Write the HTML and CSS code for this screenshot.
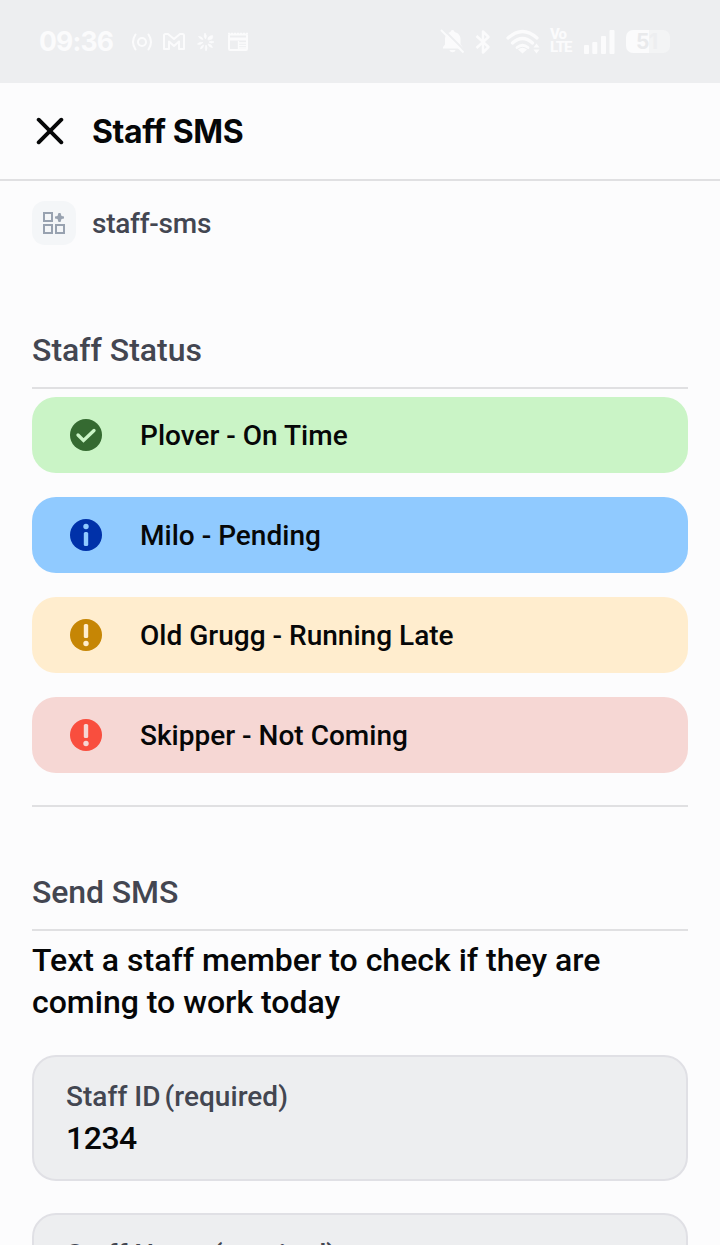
FILE: index.html
```html
<!DOCTYPE html>
<html lang="en">
<head>
<meta charset="utf-8">
<title>Staff SMS</title>
<link rel="stylesheet" href="styles.css">
</head>
<body>
<div class="screen">
  <div class="status-bar">
    <span class="clock">09:36</span>
    <div class="notifications">
      <svg width="22" height="20" viewBox="0 0 22 20" fill="none" stroke="currentColor" stroke-width="2" stroke-linecap="round"><circle cx="11" cy="10" r="4"/><path d="M4.500 2.500Q-.5 10 4.500 17.500M17.500 2.500Q22.500 10 17.500 17.500"/></svg>
      <svg width="22" height="20" viewBox="0 0 22 20" fill="none" stroke="currentColor" stroke-width="2" stroke-linejoin="round"><path d="M1 17V3.500Q1 2 2.500 2H5L11 7L17 2H19.500Q21 2 21 3.500V17H16V9.500L11 14L6 9.500V17Z"/></svg>
      <svg width="22" height="20" viewBox="0 0 22 20" fill="currentColor" stroke="currentColor" stroke-width="0.700"><path d="M10 1Q12.500 4 10.500 7Q8 4 10 1ZM3.500 4.500Q7 4 8 7.500Q5 7.500 3.500 4.500ZM2.500 12Q4.500 9.500 8 10.500Q5 13.500 2.500 12ZM5.500 17Q5.500 14 8.500 13Q8.500 16.500 5.500 17ZM11 19Q9.500 16 11 13Q13 16 11 19ZM13 12Q16.500 12 17.500 15.500Q14 15.500 13 12ZM14 10Q16 8.500 19 10Q16.500 12 14 10ZM13 8Q12.500 4 17.500 3.500Q19 7.500 13 8Z"/></svg>
      <svg width="20" height="20" viewBox="0 0 20 20" fill="none" stroke="currentColor"><rect x="1" y="2.500" width="18" height="15.500" rx="1" stroke-width="2"/><path d="M0 1.500H20" stroke-width="1.500" stroke-dasharray="2 1"/><path d="M2 7H18" stroke-width="3"/><path d="M10.500 9V18M11 11H18M11 13.500H18M11 16H18" stroke-width="1.300"/></svg>
    </div>
    <div class="system">
      <svg width="26" height="26" viewBox="0 0 26 26"><path fill="currentColor" d="M12.500 1a2 2 0 0 1 2 2c4 1 6 4 6 7v5l2 3v1.500H3V18l2-2.500V10c0-3 2-6 5.500-7a2 2 0 0 1 2-2zM9.500 21h6c-.5 3-5.500 3-6 0z"/><path d="M2.500-.5L25.500 22.500" stroke="#edeef0" stroke-width="2"/><path d="M1 1L23.500 23.500" stroke="currentColor" stroke-width="2"/></svg>
      <svg class="bluetooth" width="16" height="26" viewBox="0 0 16 26" fill="none" stroke="currentColor" stroke-width="2.500" stroke-linejoin="round"><path d="M1.500 7L13.500 18L8 23.500V2.500L13.500 8L1.500 19"/></svg>
      <svg class="wifi" width="34" height="26" viewBox="0 0 34 26" fill="none" stroke="currentColor" stroke-width="3.200" stroke-linecap="round"><path d="M2 9Q16.500-4 31 9M6.500 14Q16.500 5 26.500 14"/><path d="M11 18.500Q16.500 14 22 18.500" stroke-width="2.800"/><path d="M12 20.500Q16.500 17 21 20.500L16.500 24.500Z" fill="currentColor" stroke="none"/><path d="M27.500 18.500L30.500 14.500L33.500 18.500ZM27.500 20.500L30.500 24.500L33.500 20.500Z" fill="currentColor" stroke="none"/></svg>
      <span class="volte"><span>Vo</span><span>LTE</span></span>
      <svg class="signal" width="31" height="26" viewBox="0 0 31 26" fill="currentColor"><rect y="16" width="5" height="9" rx="1"/><rect x="8.300" y="13" width="5" height="12" rx="1"/><rect x="17" y="7" width="5" height="18" rx="1"/><rect x="25.500" y="1" width="5" height="24" rx="1"/></svg>
      <span class="battery"><span class="level-a">5</span><span class="level-b">1</span></span>
    </div>
  </div>

  <header class="app-header">
    <svg width="28" height="28" viewBox="0 0 28 28" fill="none" stroke="#060708" stroke-width="3.900" stroke-linecap="round"><path d="M2.700 2.700L25.300 25.300M25.300 2.700L2.700 25.300"/></svg>
    <h1 class="title">Staff SMS</h1>
  </header>

  <main class="content">
    <div class="app-row">
      <span class="app-icon"><svg width="24" height="24" viewBox="0 0 24 24" fill="none" stroke="#98a2b0" stroke-width="2"><path d="M2 2H10V10H2ZM2 14H10V22H2ZM14 14H22V22H14Z"/><path fill="#98a2b0" stroke="none" d="M16.500 2H18.500L19.500 5L22 5.500V7.500L19.500 8L18.500 11H16.500L15.500 8L13 7.500V5.500L15.500 5Z"/></svg></span>
      <span class="app-name">staff-sms</span>
    </div>

    <section class="status-section">
      <h2 class="section-title">Staff Status</h2>
      <div class="cards">
        <div class="card on-time"><svg class="card-icon" viewBox="0 0 32 32"><circle cx="16" cy="16" r="16" fill="#356a31"/><path d="M8 16L13.500 21.500L24 11.500" fill="none" stroke="#caf4c6" stroke-width="3.300" stroke-linecap="round"/></svg><span>Plover - On Time</span></div>
        <div class="card pending"><svg class="card-icon" viewBox="0 0 32 32"><circle cx="16" cy="16" r="16" fill="#0031a9"/><circle cx="16" cy="7.500" r="2.700" fill="#90caff"/><rect x="13.800" y="13" width="4.400" height="14" rx="1.500" fill="#90caff"/></svg><span>Milo - Pending</span></div>
        <div class="card late"><svg class="card-icon" viewBox="0 0 32 32"><circle cx="16" cy="16" r="16" fill="#c68605"/><rect x="13.800" y="5" width="4.400" height="14" rx="1.500" fill="#ffedce"/><circle cx="16" cy="24.500" r="2.700" fill="#ffedce"/></svg><span>Old Grugg - Running Late</span></div>
        <div class="card absent"><svg class="card-icon" viewBox="0 0 32 32"><circle cx="16" cy="16" r="16" fill="#f94e3e"/><rect x="13.800" y="5" width="4.400" height="14" rx="1.500" fill="#f6d7d4"/><circle cx="16" cy="24.500" r="2.700" fill="#f6d7d4"/></svg><span>Skipper - Not Coming</span></div>
      </div>
    </section>

    <section class="send-section">
      <h2 class="section-title send-title">Send SMS</h2>
      <p class="description">Text a staff member to check if they are coming to work today</p>
      <div class="field"><span class="label"><span>Staff ID</span><span>(required)</span></span><span class="value">1234</span></div>
      <div class="field"><span class="label"><span>Staff Name</span><span>(required)</span></span></div>
    </section>
  </main>
</div>
</body>
</html>
```
FILE: styles.css
```css
* { box-sizing: border-box; }
body { margin: 0; background: #fcfcfd; color: #060708; font-family: Roboto, sans-serif; font-weight: 500; }
svg { display: block; flex: none; }
h1, h2, p { margin: 0; }
.screen { width: 720px; height: 1245px; overflow: hidden; }

.status-bar { height: 83px; background: #edeef0; color: #fbfbfc; display: flex; align-items: center; padding: 0 50px 0 39px; }
.clock { width: 92px; padding-bottom: 2px; font: 700 26.500px/32px Inter, sans-serif; letter-spacing: -0.8px; }
.notifications { display: flex; align-items: center; gap: 10px; }
.notifications svg:last-child { margin-left: 1px; }
.system { display: flex; align-items: center; margin-left: auto; }
.bluetooth { margin-left: 9px; }
.wifi { margin-left: 15px; }
.volte { display: flex; flex-direction: column; width: 22px; margin-left: 10px; padding-bottom: 1px; font: 800 15px/13px Roboto, sans-serif; letter-spacing: -0.9px; }
.signal { margin-left: 12px; }
.battery { display: flex; width: 44px; height: 23px; margin-left: 11px; border-radius: 7px; background: linear-gradient(90deg, #fbfbfc 0 52%, #f3f4f5 52%); font: 700 21px/24px Inter, sans-serif; }
.level-a { width: 23px; padding-left: 10px; color: #e9eaec; }
.level-b { color: #edeef0; }

.app-header { height: 98px; border-bottom: 2px solid #e0e0e2; display: flex; align-items: center; gap: 28px; padding-left: 36px; }
.title { padding-top: 2px; font: 700 32px/40px Inter, sans-serif; letter-spacing: -0.4px; }

.content { padding: 20px 32px 0; }
.app-row { display: flex; align-items: center; gap: 16px; height: 44px; }
.app-icon { display: grid; place-items: center; width: 44px; height: 44px; border-radius: 13px; background: #f4f6f8; }
.app-name { padding-top: 2px; font-size: 28px; line-height: 36px; letter-spacing: -0.25px; color: #434651; }

.status-section { margin-top: 85px; padding-bottom: 32px; border-bottom: 2px solid #e0e0e2; }
.section-title { height: 59px; border-bottom: 2px solid #e0e0e2; font-size: 32px; line-height: 40px; font-weight: 500; color: #434651; }
.send-title { letter-spacing: -0.1px; }
.cards { display: flex; flex-direction: column; gap: 24px; margin-top: 8px; }
.card { display: flex; align-items: center; gap: 38px; height: 76px; padding-left: 38px; border-radius: 24px; font-size: 28px; letter-spacing: 0.01px; }
.card-icon { width: 32px; height: 32px; }
.on-time { background: #caf4c6; }
.pending { background: #90caff; }
.late { background: #ffedce; }
.absent { background: #f6d7d4; }

.send-section { margin-top: 65px; }
.description { margin-top: 8px; font-size: 32px; line-height: 42px; }
.field { display: flex; flex-direction: column; gap: 1px; height: 126px; margin-top: 32px; padding: 21px 32px; border: 2px solid #e0e0e5; border-radius: 24px; background: #edeef0; }
.label { display: flex; gap: 4px; font-size: 28px; line-height: 38px; letter-spacing: 0.03px; color: #434651; }
.value { font-size: 32px; line-height: 42px; letter-spacing: -0.5px; }
```
